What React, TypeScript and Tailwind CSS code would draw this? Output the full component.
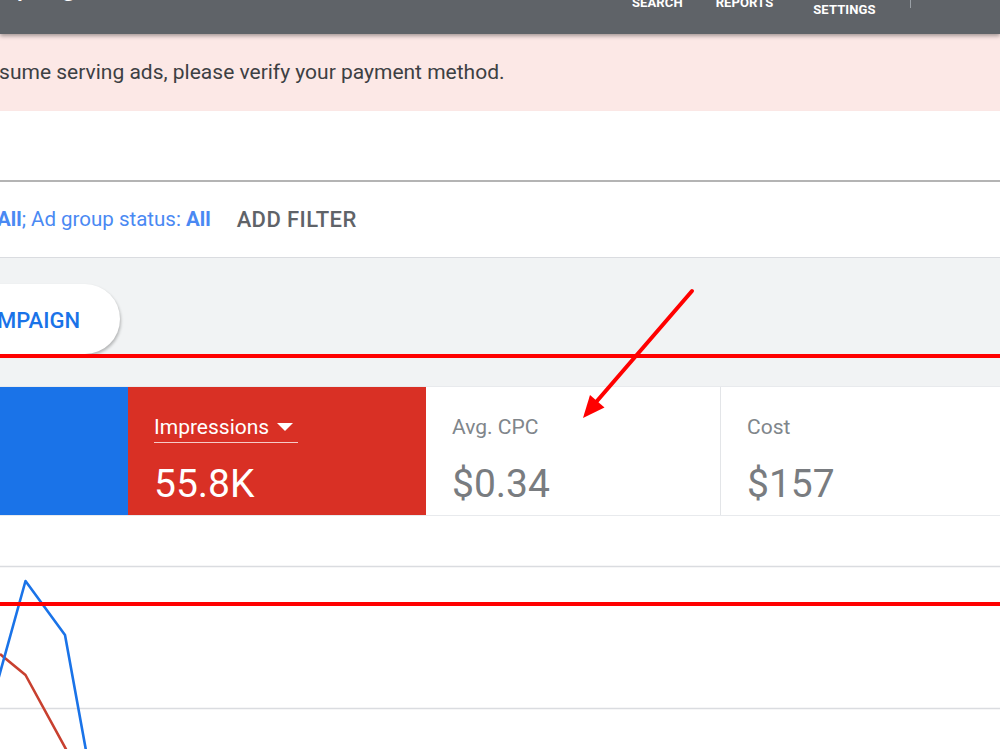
import React from "react";

function Chart() {
  return (
    <svg width="1000" height="233" viewBox="0 0 1000 233" className="block">
      <line x1="0" y1="50.5" x2="1000" y2="50.5" stroke="#dadce0" strokeWidth="1.5" />
      <line x1="0" y1="192.5" x2="1000" y2="192.5" stroke="#dadce0" strokeWidth="1.5" />
      <polyline points="0,138 25.5,159 67,235" fill="none" stroke="#c8402f" strokeWidth="2.6" strokeLinejoin="round" />
      <polyline points="-2,164 25.5,65 65,119 87,240" fill="none" stroke="#1a73e8" strokeWidth="2.6" strokeLinejoin="round" />
    </svg>
  );
}

function Card({
  label,
  value,
  bg,
  labelColor,
  valueColor,
  underline,
  width,
  divider,
}: {
  label: string;
  value: string;
  bg: string;
  labelColor: string;
  valueColor: string;
  underline?: boolean;
  width?: string;
  divider?: boolean;
}) {
  return (
    <div className={`${bg} ${width ?? "flex-1"} ${divider ? "border-r border-[#e3e5e8]" : ""} shrink-0 pl-[26px] pt-[28px]`}>
      <div
        className={`inline-flex items-center pb-[3px] border-b ${underline ? "border-[rgba(255,255,255,0.75)] pr-[5px]" : "border-transparent"}`}
      >
        <span className={`text-[21px] leading-[24px] ${labelColor}`}>{label}</span>
        {underline && (
          <svg width="16" height="8" viewBox="0 0 16 8" className="ml-[8px]">
            <polygon points="0,0 16,0 8,8" fill="#ffffff" />
          </svg>
        )}
      </div>
      <div className={`mt-[22px] text-[39px] leading-none ${valueColor}`}>{value}</div>
    </div>
  );
}

export default function App() {
  return (
    <div className="relative w-[1000px] h-[750px] overflow-hidden bg-white" style={{ fontFamily: "Roboto, 'Noto Sans', sans-serif" }}>
      {/* Header */}
      <header className="relative z-10 h-[34px] bg-[#5f6368] flex items-start overflow-hidden shadow-[0_2px_4px_rgba(0,0,0,0.35)] text-white">
        <div className="w-[632px] shrink-0">
          <span className="block ml-[-50px] mt-[-32px] text-[32px] leading-none whitespace-nowrap">Campaigns</span>
        </div>
        <div className="mt-[-5px] text-[13px] leading-[16px] font-bold tracking-[0.1px]">SEARCH</div>
        <div className="ml-[33px] mt-[-5px] text-[13px] leading-[16px] font-bold tracking-[0.1px]">REPORTS</div>
        <div className="ml-[40px] mt-[-14px] text-[13px] leading-[16px] font-bold tracking-[0.1px] flex flex-col items-center">
          <span>TOOLS &amp;</span>
          <span>SETTINGS</span>
        </div>
        <div className="ml-[34px] w-px h-[8px] bg-[#9aa0a6]" />
      </header>

      {/* Alert banner */}
      <div className="h-[77px] bg-[#fce8e6] flex items-center">
        <span className="ml-[-19px] text-[21px] text-[#3c4043] whitespace-nowrap">resume serving ads, please verify your payment method.</span>
      </div>

      {/* White panel */}
      <div className="h-[71px] bg-white border-b-2 border-[#b4b4b4] shadow-[0_2px_3px_rgba(0,0,0,0.12)]" />

      {/* Filter row */}
      <div className="h-[76px] bg-white border-b border-[#dadce0] flex items-center whitespace-nowrap">
        <span className="ml-[-3px] text-[20.5px] text-[#4a89f3]">
          <span className="font-bold">All</span>; Ad group status: <span className="font-bold">All</span>
        </span>
        <span className="ml-[26px] text-[22px] font-medium tracking-[0.4px] text-[#5f6368]">ADD FILTER</span>
      </div>

      {/* Gray toolbar */}
      <div className="h-[128px] bg-[#f1f3f4] pt-[26px]">
        <div className="ml-[-80px] w-[200px] h-[70px] rounded-full bg-white shadow-[1px_2px_3px_rgba(0,0,0,0.25)] flex items-center justify-end pr-[40px]">
          <span className="mt-[3px] text-[22px] font-medium text-[#1a73e8] whitespace-nowrap">CAMPAIGN</span>
        </div>
      </div>

      {/* Metric cards */}
      <div className="h-[130px] flex border-b border-[#e8eaed] border-t border-t-[#e8eaed]">
        <div className="w-[128px] shrink-0 bg-[#1a73e8]" />
        <Card label="Impressions" value="55.8K" bg="bg-[#d93025]" labelColor="text-white" valueColor="text-white" underline width="w-[298px]" />
        <Card label="Avg. CPC" value="$0.34" bg="bg-white" labelColor="text-[#80868b]" valueColor="text-[#797c80]" width="w-[295px]" divider />
        <Card label="Cost" value="$157" bg="bg-white" labelColor="text-[#80868b]" valueColor="text-[#797c80]" />
      </div>

      {/* Chart */}
      <Chart />

      {/* Annotations */}
      <div className="absolute left-0 top-[354px] w-[1000px] h-[4px] bg-[#ff0000]" />
      <div className="absolute left-0 top-[602px] w-[1000px] h-[4px] bg-[#ff0000]" />
      <svg className="absolute left-0 top-0" width="1000" height="750" viewBox="0 0 1000 750">
        <line x1="692" y1="291" x2="597" y2="401" stroke="#ff0000" strokeWidth="4" strokeLinecap="round" />
        <polygon points="583,418 604.5,407.5 590,395" fill="#ff0000" />
      </svg>
    </div>
  );
}
